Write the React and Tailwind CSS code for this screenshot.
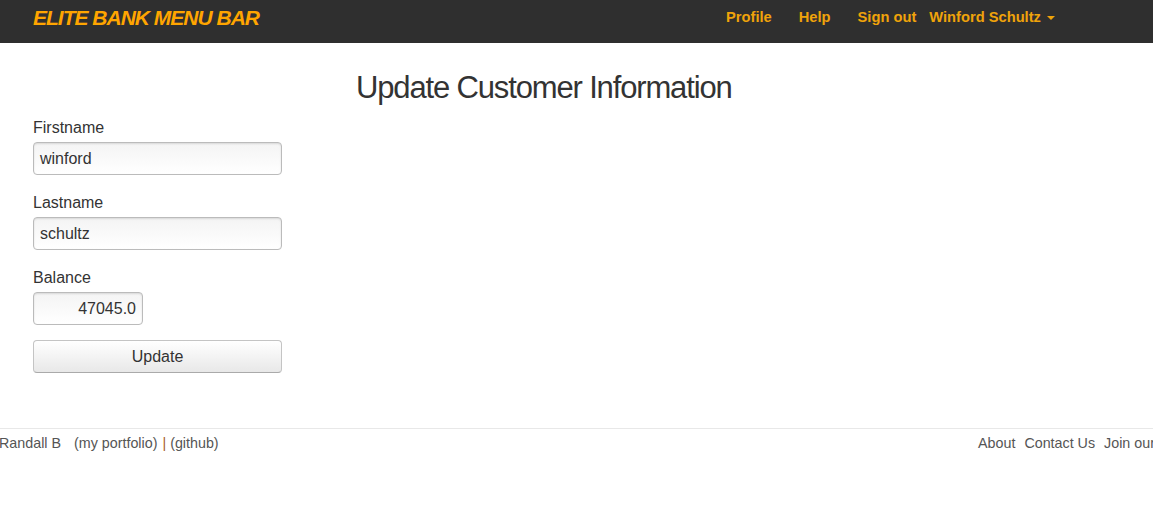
import React from "react";

export default function App() {
  return (
    <div className="w-[1153px] h-[532px] bg-white overflow-hidden" style={{ fontFamily: '"Liberation Sans", Arial, sans-serif' }}>
      {/* Navbar */}
      <div className="h-[43px] bg-[#2f2f2f] flex items-start">
        <div className="w-[726px] pl-[33px] pt-[6px]">
          <span className="italic font-bold text-[21px] leading-[24px] tracking-[-1px] text-[#ffa500]">ELITE BANK MENU BAR</span>
        </div>
        <div className="flex items-start pt-[7px] text-[14.7px] leading-[20px] font-bold text-[#f0a30a]">
          <span>Profile</span>
          <span className="ml-[27px]">Help</span>
          <span className="ml-[27px]">Sign out</span>
          <span className="ml-[13px] flex items-center">
            Winford Schultz
            <span className="ml-[6px] mt-[1px] w-0 h-0 border-l-[4px] border-r-[4px] border-t-[4px] border-l-transparent border-r-transparent border-t-[#f0a30a]"></span>
          </span>
        </div>
      </div>

      {/* Title */}
      <div className="pt-[27px] pl-[356px]">
        <h1 className="text-[31px] leading-[36px] tracking-[-1.15px] text-[#333] font-normal">Update Customer Information</h1>
      </div>

      {/* Form */}
      <div className="pl-[33px] mt-[12px] w-[282px] text-[#333]">
        <div className="mb-[18px]">
          <label className="block text-[16px] leading-[20px] mb-[4px]">Firstname</label>
          <div className="h-[33px] w-[249px] rounded-[4px] border border-[#bbb] bg-gradient-to-b from-[#f4f4f4] to-white shadow-[inset_0_1px_2px_rgba(0,0,0,0.12)] px-[6px] flex items-center text-[16px]">winford</div>
        </div>
        <div className="mb-[18px]">
          <label className="block text-[16px] leading-[20px] mb-[4px]">Lastname</label>
          <div className="h-[33px] w-[249px] rounded-[4px] border border-[#bbb] bg-gradient-to-b from-[#f4f4f4] to-white shadow-[inset_0_1px_2px_rgba(0,0,0,0.12)] px-[6px] flex items-center text-[16px]">schultz</div>
        </div>
        <div className="mb-[15px]">
          <label className="block text-[16px] leading-[20px] mb-[4px]">Balance</label>
          <div className="h-[33px] w-[110px] rounded-[4px] border border-[#bbb] bg-gradient-to-b from-[#f4f4f4] to-white shadow-[inset_0_1px_2px_rgba(0,0,0,0.12)] px-[6px] flex items-center justify-end text-[16px]">47045.0</div>
        </div>
        <div className="h-[33px] w-[249px] rounded-[4px] border border-[#c4c4c4] border-b-[#aaa] bg-gradient-to-b from-white to-[#e8e8e8] flex items-center justify-center text-[16px]">Update</div>
      </div>

      {/* Footer */}
      <div className="mt-[55px] border-t border-[#e8e8e8] flex pt-[4px] text-[14.3px] leading-[20px] text-[#555] whitespace-nowrap overflow-hidden">
        <div className="flex">
          <span className="-ml-[1px]">Randall B</span>
          <span className="ml-[13px]">(my portfolio)</span>
          <span className="ml-[5px] text-[#a8601e]">|</span>
          <span className="ml-[4px]">(github)</span>
        </div>
        <div className="flex-1"></div>
        <div className="w-[175px] flex gap-[9px]">
          <span>About</span>
          <span>Contact Us</span>
          <span>Join our newsletter</span>
        </div>
      </div>
    </div>
  );
}
